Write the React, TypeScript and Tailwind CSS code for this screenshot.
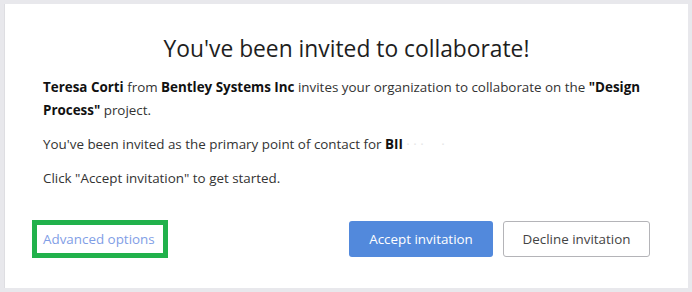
import React from "react";

export default function App() {
  return (
    <div
      className="w-[692px] h-[292px] bg-[#e8e8ec] p-[4px]"
      style={{ fontFamily: '"Open Sans", "Noto Sans", sans-serif' }}
    >
      <div className="w-[684px] h-[284px] bg-white border-l border-[#dedee2] pt-[29px] pl-[38px] pr-[38px] pb-[32px] flex flex-col">
        <h1 className="text-[22.8px] leading-[32px] text-[#1e1e1e] text-center">
          You've been invited to collaborate!
        </h1>
        <p className="mt-[11px] text-[13.4px] leading-[23px] text-[#333]">
          <b className="font-bold text-[#111]">Teresa Corti</b> from{" "}
          <b className="font-bold text-[#111]">Bentley Systems Inc</b> invites your organization to
          collaborate on the <b className="font-bold text-[#111]">"Design Process"</b> project.
        </p>
        <p className="mt-[11px] text-[13.4px] leading-[23px] text-[#333]">
          You've been invited as the primary point of contact for{" "}
          <b className="font-bold text-[#111]">BII</b>
          <span className="text-[#e6e6e6]"> · · · &nbsp;&nbsp;&nbsp;&nbsp;·</span>
        </p>
        <p className="mt-[11px] text-[13.4px] leading-[23px] text-[#333]">
          Click "Accept invitation" to get started.
        </p>
        <div className="mt-[30px] flex items-center justify-between">
          <div className="-ml-[11px] border-[5px] border-[#21b14b] pl-[6px] pr-[8px] h-[38px] flex items-center">
            <a className="text-[13.4px] leading-[20px] text-[#7f9ee6]">Advanced options</a>
          </div>
          <div className="flex items-center gap-[10px]">
            <button className="w-[144px] h-[36px] rounded-[3px] bg-[#5289dc] text-white text-[13.4px]">
              Accept invitation
            </button>
            <button className="w-[147px] h-[36px] rounded-[3px] border border-[#b4b4b8] bg-white text-[#444] text-[13.4px]">
              Decline invitation
            </button>
          </div>
        </div>
      </div>
    </div>
  );
}
